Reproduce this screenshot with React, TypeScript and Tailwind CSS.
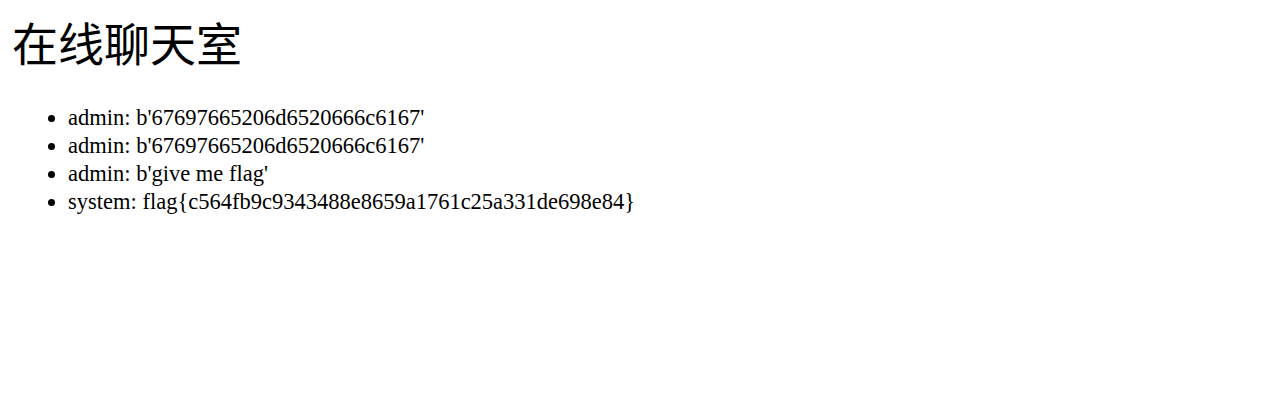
const messages = [
  { user: "admin", text: "b'67697665206d6520666c6167'" },
  { user: "admin", text: "b'67697665206d6520666c6167'" },
  { user: "admin", text: "b'give me flag'" },
  { user: "system", text: "flag{c564fb9c9343488e8659a1761c25a331de698e84}" },
];

export default function App() {
  return (
    <div className="min-h-[405px] bg-white px-[12px] pt-[14px] text-black">
      <h1 className="font-['Noto_Sans_CJK_SC',sans-serif] text-[46px] leading-[54px] font-normal">
        在线聊天室
      </h1>
      <ul className="mt-[36px] list-disc pl-[56px] font-['Liberation_Serif',serif] text-[22.5px] leading-[28px]">
        {messages.map((m, i) => (
          <li key={i}>
            {m.user}: {m.text}
          </li>
        ))}
      </ul>
    </div>
  );
}
